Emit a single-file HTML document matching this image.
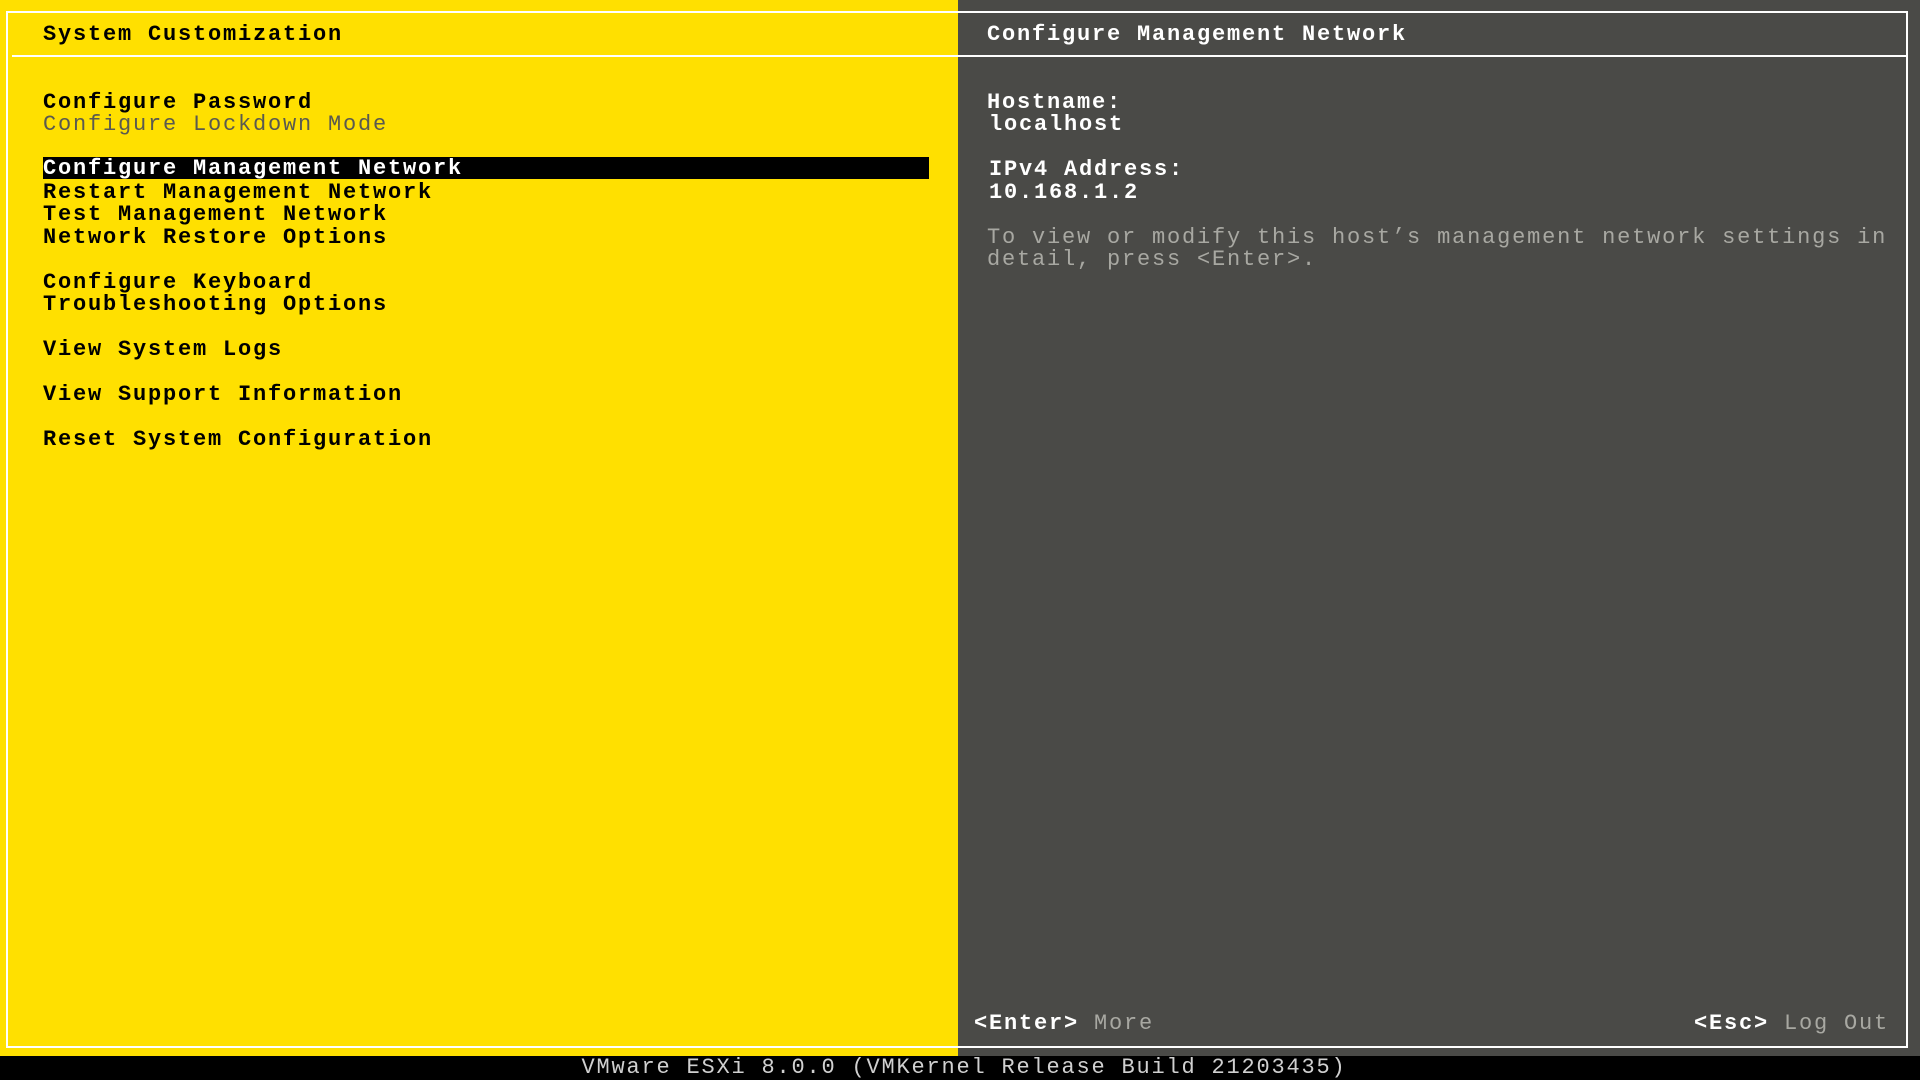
<!DOCTYPE html>
<html><head><meta charset="utf-8"><style>
*{margin:0;padding:0;box-sizing:border-box}
body{width:1920px;height:1080px;overflow:hidden;position:relative;background:#4a4a47;font-family:"Liberation Mono","DejaVu Sans Mono",monospace;font-size:22px;letter-spacing:1.8px;font-weight:bold}
.l{position:absolute;left:0;top:0;width:958px;height:1056px;background:#ffe000}
.r{position:absolute;left:958px;top:0;width:962px;height:1056px;background:#4a4a47}
.bar{position:absolute;left:0;top:1056px;width:1920px;height:24px;background:#000;color:#d0d0d0;text-align:center;line-height:24px;font-weight:normal;padding-left:8px}
.t{position:absolute;white-space:pre;line-height:22.5px;height:22.5px}
.k{color:#000}.g{color:#5a5a50;font-weight:normal}.w{color:#fff}.d{color:#a8a8a2;font-weight:normal}
.hl{position:absolute;left:43px;top:157px;width:886px;height:22px;background:#000}
.ln{position:absolute;background:#fff}
</style></head><body>
<div class="l"></div><div class="r"></div>
<div class="ln" style="left:6px;top:11px;width:1902px;height:2px"></div>
<div class="ln" style="left:6px;top:11px;width:2px;height:1037px"></div>
<div class="ln" style="left:1906px;top:11px;width:2px;height:1037px"></div>
<div class="ln" style="left:6px;top:1046px;width:1902px;height:2px"></div>
<div class="ln" style="left:12px;top:55px;width:1894px;height:2px"></div>
<div class="hl"></div>
<div class="t k" style="left:43px;top:24px">System Customization</div>
<div class="t k" style="left:43px;top:92px">Configure Password</div>
<div class="t g" style="left:43px;top:114px">Configure Lockdown Mode</div>
<div class="t w" style="left:43px;top:158px">Configure Management Network</div>
<div class="t k" style="left:43px;top:182px">Restart Management Network</div>
<div class="t k" style="left:43px;top:204px">Test Management Network</div>
<div class="t k" style="left:43px;top:227px">Network Restore Options</div>
<div class="t k" style="left:43px;top:272px">Configure Keyboard</div>
<div class="t k" style="left:43px;top:294px">Troubleshooting Options</div>
<div class="t k" style="left:43px;top:339px">View System Logs</div>
<div class="t k" style="left:43px;top:384px">View Support Information</div>
<div class="t k" style="left:43px;top:429px">Reset System Configuration</div>
<div class="t w" style="left:987px;top:24px">Configure Management Network</div>
<div class="t w" style="left:987px;top:92px">Hostname:</div>
<div class="t w" style="left:989px;top:114px">localhost</div>
<div class="t w" style="left:989px;top:159px">IPv4 Address:</div>
<div class="t w" style="left:989px;top:182px">10.168.1.2</div>
<div class="t d" style="left:987px;top:227px">To view or modify this host’s management network settings in</div>
<div class="t d" style="left:987px;top:249px">detail, press &lt;Enter&gt;.</div>
<div class="t" style="left:974px;top:1013px"><span class="w">&lt;Enter&gt;</span> <span class="d">More</span></div>
<div class="t" style="left:1694px;top:1013px"><span class="w">&lt;Esc&gt;</span> <span class="d">Log Out</span></div>
<div class="bar">VMware ESXi 8.0.0 (VMKernel Release Build 21203435)</div>
</body></html>
